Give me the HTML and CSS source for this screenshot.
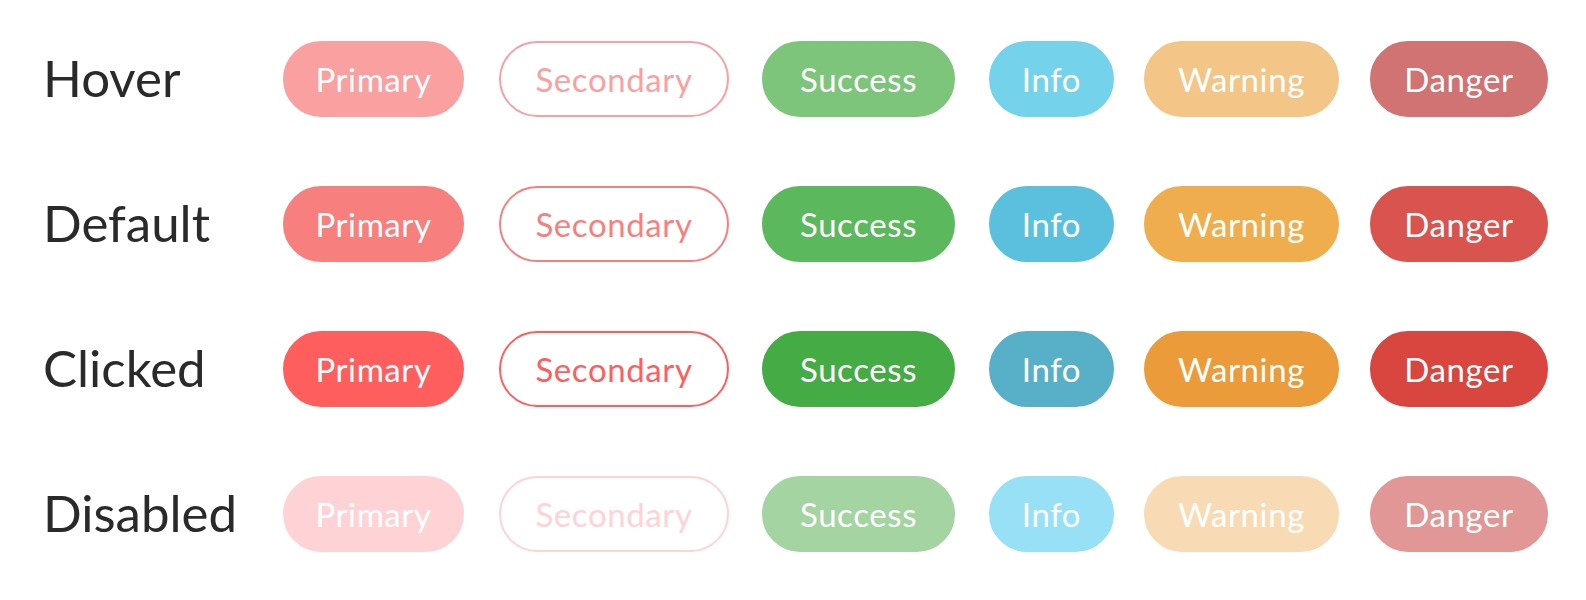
FILE: index.html
```html
<!DOCTYPE html>
<html lang="en">
<head>
<meta charset="utf-8">
<title>Button states</title>
<link rel="stylesheet" href="styles.css">
</head>
<body>
<main class="sheet">
  <div class="label">Hover</div>
  <button class="btn btn-primary hover">Primary</button>
  <button class="btn btn-secondary hover">Secondary</button>
  <button class="btn btn-success hover">Success</button>
  <button class="btn btn-info hover">Info</button>
  <button class="btn btn-warning hover">Warning</button>
  <button class="btn btn-danger hover">Danger</button>

  <div class="label">Default</div>
  <button class="btn btn-primary">Primary</button>
  <button class="btn btn-secondary">Secondary</button>
  <button class="btn btn-success">Success</button>
  <button class="btn btn-info">Info</button>
  <button class="btn btn-warning">Warning</button>
  <button class="btn btn-danger">Danger</button>

  <div class="label">Clicked</div>
  <button class="btn btn-primary clicked">Primary</button>
  <button class="btn btn-secondary clicked">Secondary</button>
  <button class="btn btn-success clicked">Success</button>
  <button class="btn btn-info clicked">Info</button>
  <button class="btn btn-warning clicked">Warning</button>
  <button class="btn btn-danger clicked">Danger</button>

  <div class="label">Disabled</div>
  <button class="btn btn-primary disabled">Primary</button>
  <button class="btn btn-secondary disabled">Secondary</button>
  <button class="btn btn-success disabled">Success</button>
  <button class="btn btn-info disabled">Info</button>
  <button class="btn btn-warning disabled">Warning</button>
  <button class="btn btn-danger disabled">Danger</button>
</main>
</body>
</html>
```
FILE: styles.css
```css
html, body {
  margin: 0;
  padding: 0;
  background: #ffffff;
}

body {
  font-family: "Lato", "Noto Sans", sans-serif;
}

.sheet {
  display: grid;
  grid-template-columns: 238px 216px 263px 227px 155px 226px 179px;
  grid-auto-rows: 76px;
  row-gap: 69px;
  padding: 41px 0 0 45px;
}

.label {
  align-self: center;
  font-size: 51px;
  color: #2a2a2a;
  line-height: 1;
  margin: -3px 0 0 -2px;
}

.btn {
  box-sizing: border-box;
  height: 76px;
  border-radius: 38px;
  border: 2px solid transparent;
  padding: 0;
  font-family: "Lato", "Noto Sans", sans-serif;
  font-size: 33px;
  font-weight: 400;
  letter-spacing: 0.6px;
  color: #ffffff;
  line-height: 1;
  cursor: pointer;
}

.btn-primary { width: 181px; background: #f77f7e; border-color: #f77f7e; }
.btn-secondary { width: 230px; background: #ffffff; border-color: #f77f7e; color: #f77f7e; }
.btn-success { width: 193px; background: #5cb85c; border-color: #5cb85c; }
.btn-info { width: 125px; background: #5bc0de; border-color: #5bc0de; }
.btn-warning { width: 195px; background: #f0ad4e; border-color: #f0ad4e; }
.btn-danger { width: 178px; background: #d9534f; border-color: #d9534f; }

.btn-primary.hover { background: #faa0a0; border-color: #faa0a0; }
.btn-secondary.hover { border-color: #f9a0a0; color: #f9a0a0; }
.btn-success.hover { background: #7ec57c; border-color: #7ec57c; }
.btn-info.hover { background: #74d3eb; border-color: #74d3eb; }
.btn-warning.hover { background: #f3c586; border-color: #f3c586; }
.btn-danger.hover { background: #d07372; border-color: #d07372; }

.btn-primary.clicked { background: #ff5e5e; border-color: #ff5e5e; }
.btn-secondary.clicked { border-color: #ff5e5e; color: #ff5e5e; }
.btn-success.clicked { background: #45ab45; border-color: #45ab45; }
.btn-info.clicked { background: #58afc8; border-color: #58afc8; }
.btn-warning.clicked { background: #eb9b3a; border-color: #eb9b3a; }
.btn-danger.clicked { background: #d9453f; border-color: #d9453f; }

.btn-primary.disabled { background: #ffd3d5; border-color: #ffd3d5; }
.btn-secondary.disabled { border-color: #ffd3d5; color: #ffd3d5; }
.btn-success.disabled { background: #a3d4a2; border-color: #a3d4a2; }
.btn-info.disabled { background: #97e0f5; border-color: #97e0f5; }
.btn-warning.disabled { background: #f8dbb4; border-color: #f8dbb4; }
.btn-danger.disabled { background: #e09796; border-color: #e09796; }
```
